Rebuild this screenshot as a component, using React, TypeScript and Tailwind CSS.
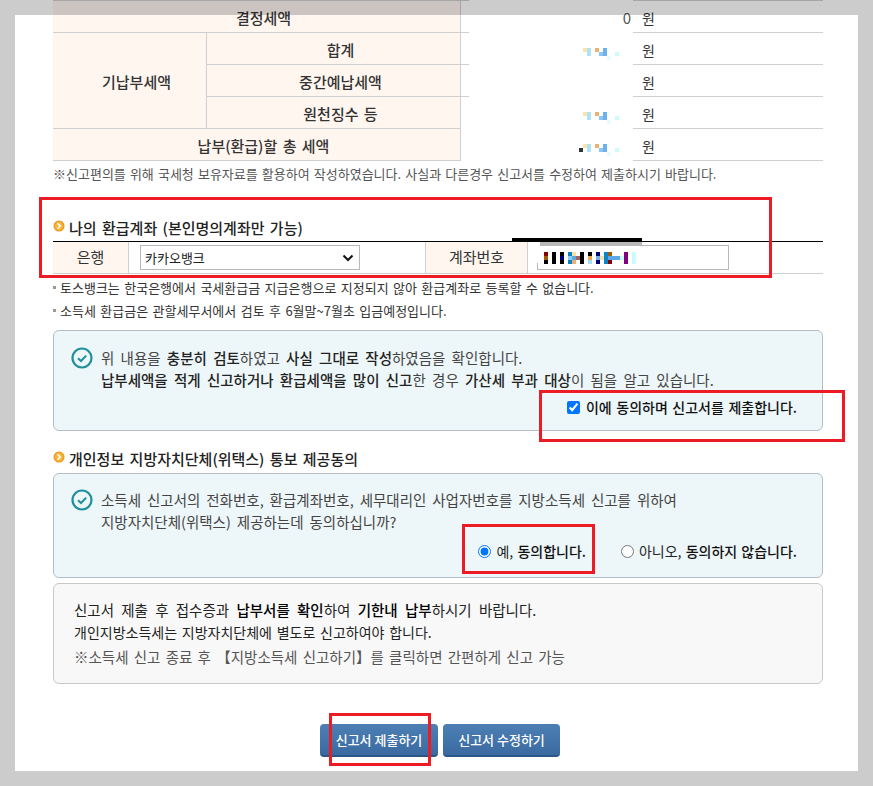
const font = { fontFamily: '"Noto Sans CJK KR", "Liberation Sans", sans-serif' }

function Bullet() {
  return (
    <svg width="12" height="12" viewBox="0 0 12 12" className="shrink-0 -translate-y-[2px]">
      <circle cx="6" cy="6" r="5.5" fill="#ee9a1c" />
      <circle cx="6" cy="6" r="4.2" fill="#f7b53c" />
      <path d="M4.5 3.2 7.3 6 4.5 8.8" fill="none" stroke="#fff" strokeWidth="1.6" />
    </svg>
  )
}

function CheckCircle() {
  return (
    <svg width="22" height="22" viewBox="0 0 22 22" className="shrink-0">
      <circle cx="11" cy="11" r="9.5" fill="none" stroke="#1f8f9c" strokeWidth="2.2" />
      <path d="M7 11.2 10 14 15.2 8.6" fill="none" stroke="#1f8f9c" strokeWidth="2" />
    </svg>
  )
}

function AmountMosaic({ lead = false }: { lead?: boolean }) {
  return (
    <svg width="48" height="16" viewBox="0 0 48 16" className="mt-[11px] shrink-0">
      {lead && <rect x="0" y="4" width="4" height="4" fill="#333" />}
      <rect x="4" y="0" width="4" height="4" fill="#fde3ab" />
      <rect x="8" y="0" width="4" height="8" fill="#ade3f7" />
      <rect x="16" y="0" width="4" height="4" fill="#e8b273" />
      <rect x="20" y="4" width="4" height="4" fill="#8cc6f5" />
      <rect x="24" y="0" width="4" height="8" fill="#6cb0ee" />
      <rect x="28" y="8" width="4" height="4" fill="#e6fbfd" />
      <rect x="36" y="4" width="4" height="4" fill="#ccfbff" />
    </svg>
  )
}

function AccountMosaic() {
  return (
    <svg width="96" height="12" viewBox="0 0 96 12">
      <rect x="0" y="0" width="4" height="4" fill="#8b0000" />
      <rect x="0" y="4" width="4" height="4" fill="#a65a00" />
      <rect x="0" y="8" width="4" height="4" fill="#000" />
      <rect x="8" y="0" width="4" height="12" fill="#000" />
      <rect x="16" y="0" width="4" height="4" fill="#000" />
      <rect x="16" y="4" width="4" height="4" fill="#00007a" />
      <rect x="16" y="8" width="4" height="4" fill="#000" />
      <rect x="24" y="0" width="4" height="4" fill="#0a84c6" />
      <rect x="24" y="4" width="4" height="4" fill="#8ad0f5" />
      <rect x="24" y="8" width="4" height="4" fill="#0a84c6" />
      <rect x="28" y="0" width="4" height="4" fill="#ffe0a0" />
      <rect x="28" y="4" width="4" height="4" fill="#5aa8e0" />
      <rect x="28" y="8" width="4" height="4" fill="#e8b273" />
      <rect x="32" y="4" width="4" height="4" fill="#a86060" />
      <rect x="36" y="0" width="4" height="12" fill="#000" />
      <rect x="44" y="0" width="4" height="4" fill="#000" />
      <rect x="44" y="4" width="4" height="4" fill="#e8a850" />
      <rect x="44" y="8" width="4" height="4" fill="#a0dff5" />
      <rect x="52" y="0" width="4" height="4" fill="#00007a" />
      <rect x="52" y="4" width="4" height="4" fill="#70b0e0" />
      <rect x="52" y="8" width="4" height="4" fill="#00007a" />
      <rect x="56" y="4" width="4" height="4" fill="#f5e0b0" />
      <rect x="60" y="0" width="4" height="12" fill="#0a84c6" />
      <rect x="64" y="0" width="4" height="4" fill="#a65a00" />
      <rect x="64" y="4" width="12" height="4" fill="#5aa8e8" />
      <rect x="64" y="8" width="4" height="4" fill="#8b0000" />
      <rect x="76" y="4" width="4" height="4" fill="#ccfbff" />
      <rect x="80" y="0" width="4" height="12" fill="#800080" />
      <rect x="88" y="0" width="4" height="12" fill="#ccfbff" />
    </svg>
  )
}

const rowLine = 'border-b border-[#cfcfcf]'
const head = `flex items-center justify-center bg-[#fff6f0] pl-[14px] pt-[3px] text-[15px] font-medium text-[#333] [word-spacing:2px] ${rowLine}`

function AmountCell({ value, mosaic, lead, last }: { value?: string; mosaic?: boolean; lead?: boolean; last?: boolean }) {
  return (
    <div className={`flex h-[32px] items-center border-l border-[#cfcfcf] ${rowLine}`}>
      <div className={`flex h-[33px] items-center justify-end bg-white pt-[3px] text-[15px] text-[#555] ${last ? 'w-[172px]' : 'ml-[8px] w-[164px]'} ${value ? 'pr-[2px]' : 'pr-[6px]'}`}>
        {mosaic && <AmountMosaic lead={lead} />}
        {value}
      </div>
      <span className="ml-[9px] pt-[3px] text-[14px] text-[#333]">원</span>
    </div>
  )
}

const strong = 'font-medium text-[#222]'

export default function App() {
  return (
    <div className="relative h-[786px] w-[873px] overflow-hidden bg-white text-[13px]" style={font}>
      <div className="flex flex-col pl-[53px] pr-[50px]">
        <div className="border-t border-[#cfcfcf]">
          <div className="grid grid-cols-[154px_253px_363px]">
            <div className={`${head} col-span-2 h-[32px]`}>결정세액</div>
            <AmountCell value="0" />

            <div className={`${head} row-span-3 border-r`}>기납부세액</div>
            <div className={`${head} h-[32px]`}>합계</div>
            <AmountCell mosaic />
            <div className={`${head} h-[32px]`}>중간예납세액</div>
            <AmountCell />
            <div className={`${head} h-[32px]`}>원천징수 등</div>
            <AmountCell mosaic />

            <div className={`${head} col-span-2 h-[32px]`}>납부(환급)할 총 세액</div>
            <AmountCell mosaic lead last />
          </div>
        </div>

        <p className="mt-[4px] text-[13px] leading-[18px] text-[#555] [word-spacing:1.2px]">※신고편의를 위해 국세청 보유자료를 활용하여 작성하였습니다. 사실과 다른경우 신고서를 수정하여 제출하시기 바랍니다.</p>

        <div className="mt-[35px] flex items-center gap-[4px] text-[15px] font-medium leading-[20px] text-[#222] [word-spacing:2px]">
          <Bullet />
          <span>나의 환급계좌 (본인명의계좌만 가능)</span>
        </div>
        <div className="relative mt-[3px] flex h-[33px] border-t border-b border-t-black border-b-[#cfcfcf]">
          <div className="flex w-[76px] items-center justify-center border-r border-[#cfcfcf] bg-[#fff6f0] text-[15px] text-[#333]">은행</div>
          <div className="flex w-[296px] items-center pl-[11px]">
            <div className="flex h-[25px] w-[220px] items-center justify-between border border-[#b8b8b8] bg-white pl-[4px] pr-[5px] text-[13px] text-[#222]">
              <span>카카오뱅크</span>
              <svg width="12" height="8" viewBox="0 0 12 8"><path d="M1.5 1.5 6 6l4.5-4.5" fill="none" stroke="#111" strokeWidth="2" /></svg>
            </div>
          </div>
          <div className="flex w-[103px] items-center justify-center border-x border-[#cfcfcf] bg-[#fff6f0] text-[15px] text-[#333]">계좌번호</div>
          <div className="flex items-center pl-[9px]">
            <div className="flex h-[25px] w-[192px] items-center border border-[#b8b8b8] bg-white pl-[6px]">
              <AccountMosaic />
            </div>
          </div>
          {/* redaction bars over the account field */}
          <div className="absolute left-[459px] top-[-4px] h-[4px] w-[130px] bg-black" />
          <div className="absolute left-[487px] top-0 h-[4px] w-[102px] bg-[#b8b8b8]" />
          <div className="absolute left-[475px] top-0 h-[21px] w-[12px] bg-white" />
          <div className="absolute left-[487px] top-[4px] h-[17px] w-[3px] bg-white" />
        </div>

        <ul className="mt-[2px] text-[13px] text-[#333] [word-spacing:1.5px]">
          <li className="flex h-[23px] items-center gap-[4px]"><span className="size-[3px] bg-[#999]" />토스뱅크는 한국은행에서 국세환급금 지급은행으로 지정되지 않아 환급계좌로 등록할 수 없습니다.</li>
          <li className="flex h-[23px] items-center gap-[4px]"><span className="size-[3px] bg-[#999]" />소득세 환급금은 관할세무서에서 검토 후 6월말~7월초 입금예정입니다.</li>
        </ul>

        <section className="mt-[8px] h-[101px] rounded-[6px] border border-[#b4bec8] bg-[#edf6f8] pl-[17px] pr-[25px] pt-[16px] text-[14.5px] leading-[22px] text-[#444] [word-spacing:3px]">
          <div className="flex gap-[8px]">
            <CheckCircle />
            <div>
              <p>위 내용을 <b className={strong}>충분히 검토</b>하였고 <b className={strong}>사실 그대로 작성</b>하였음을 확인합니다.</p>
              <p><b className={strong}>납부세액을 적게 신고하거나 환급세액을 많이 신고</b>한 경우 <b className={strong}>가산세 부과 대상</b>이 됨을 알고 있습니다.</p>
            </div>
          </div>
          <label className="mt-[5px] flex items-center justify-end gap-[6px] text-[14px] font-medium text-[#111] [word-spacing:1.4px]">
            <input type="checkbox" defaultChecked className="size-[13px] accent-[#0075ff]" />
            이에 동의하며 신고서를 제출합니다.
          </label>
        </section>

        <div className="mt-[18px] flex items-center gap-[4px] text-[15px] font-medium leading-[20px] text-[#222] [word-spacing:2px]">
          <Bullet />
          <span>개인정보 지방자치단체(위택스) 통보 제공동의</span>
        </div>

        <section className="mt-[4px] h-[105px] rounded-[6px] border border-[#b4bec8] bg-[#edf6f8] pl-[17px] pr-[25px] pt-[15px] text-[14.5px] leading-[22px] text-[#444] [word-spacing:2.7px]">
          <div className="flex gap-[8px]">
            <CheckCircle />
            <div>
              <p>소득세 신고서의 전화번호, 환급계좌번호, 세무대리인 사업자번호를 지방소득세 신고를 위하여</p>
              <p>지방자치단체(위택스) 제공하는데 동의하십니까?</p>
            </div>
          </div>
          <div className="mt-[7px] flex items-center justify-end text-[14px] text-[#222] [word-spacing:1px]">
            <label className="flex items-center gap-[5px]">
              <input type="radio" name="consent" defaultChecked className="size-[13px] accent-[#0075ff]" />
              <span>예, <b className="font-medium text-[#111]">동의합니다.</b></span>
            </label>
            <label className="ml-[35px] flex items-center gap-[5px]">
              <input type="radio" name="consent" className="size-[13px]" />
              <span>아니오, <b className="font-medium text-[#111]">동의하지 않습니다.</b></span>
            </label>
          </div>
        </section>

        <section className="mt-[5px] h-[101px] rounded-[6px] border border-[#c8c8c8] bg-[#f8f8f8] pl-[20px] pt-[15px] text-[14px] leading-[22px] text-[#222]">
          <p className="text-[14.5px] [word-spacing:4px]">신고서 제출 후 접수증과 <b className="font-medium text-black">납부서를 확인</b>하여 <b className="font-medium text-black">기한내 납부</b>하시기 바랍니다.</p>
          <p className="[word-spacing:1.6px]">개인지방소득세는 지방자치단체에 별도로 신고하여야 합니다.</p>
          <p className="mt-[3px] text-[14.5px] text-[#555] [word-spacing:2px]">※소득세 신고 종료 후 【지방소득세 신고하기】를 클릭하면 간편하게 신고 가능</p>
        </section>

        <div className="mt-[40px] flex justify-center gap-[5px] pl-[4px]">
          <button className="h-[33px] w-[118px] rounded-[4px] border-b-2 border-[#2a5585] bg-gradient-to-b from-[#4d7fb5] to-[#3a6aa0] text-[13px] font-medium text-white">신고서 제출하기</button>
          <button className="h-[33px] w-[117px] rounded-[4px] border-b-2 border-[#2a5585] bg-gradient-to-b from-[#4d7fb5] to-[#3a6aa0] text-[13px] font-medium text-white">신고서 수정하기</button>
        </div>
      </div>

      {/* dimmed edge of the popup */}
      <div className="pointer-events-none absolute inset-0 border-[15px] border-black/20" />

      {/* red marks drawn over the capture */}
      <div className="pointer-events-none absolute left-[39px] top-[197px] h-[81px] w-[733px] border-[3px] border-[#ed1c24]" />
      <div className="pointer-events-none absolute left-[539px] top-[390px] h-[52px] w-[306px] border-[3px] border-[#ed1c24]" />
      <div className="pointer-events-none absolute left-[462px] top-[524px] h-[50px] w-[133px] border-[3px] border-[#ed1c24]" />
      <div className="pointer-events-none absolute left-[329px] top-[713px] h-[53px] w-[102px] border-[3px] border-[#ed1c24]" />
    </div>
  )
}
